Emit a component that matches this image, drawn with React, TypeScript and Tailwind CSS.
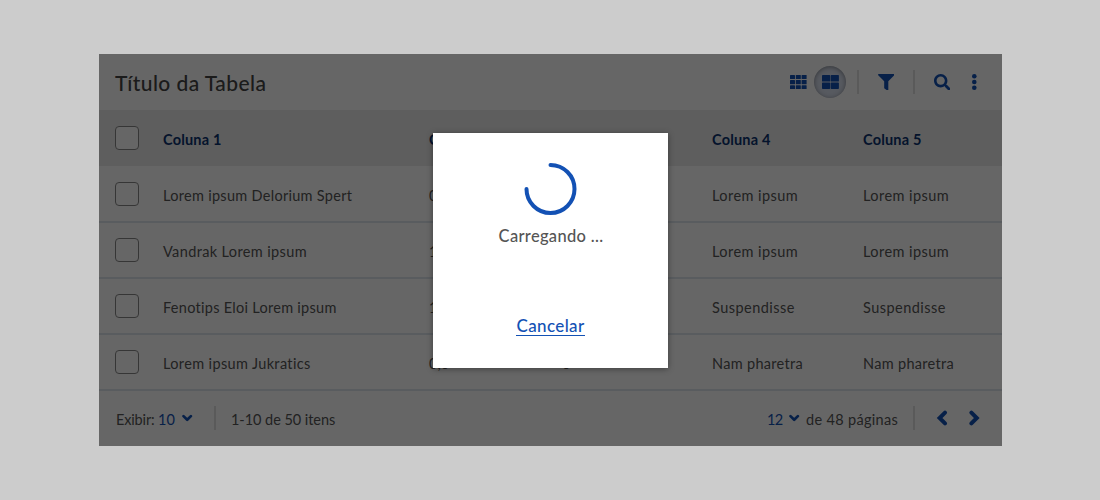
import { FaFilter, FaSearch } from 'react-icons/fa';

type Cell = { text: string; track: string };

const rows: Cell[][] = [
  [
    { text: 'Lorem ipsum Delorium Spert', track: 'tracking-[0.29px]' },
    { text: '0', track: '' },
    { text: '', track: '' },
    { text: 'Lorem ipsum', track: 'tracking-[0.43px]' },
    { text: 'Lorem ipsum', track: 'tracking-[0.43px]' },
  ],
  [
    { text: 'Vandrak Lorem ipsum', track: 'tracking-[0.37px]' },
    { text: '1', track: '' },
    { text: '', track: '' },
    { text: 'Lorem ipsum', track: 'tracking-[0.43px]' },
    { text: 'Lorem ipsum', track: 'tracking-[0.43px]' },
  ],
  [
    { text: 'Fenotips Eloi Lorem ipsum', track: 'tracking-[0.28px]' },
    { text: '1', track: '' },
    { text: '', track: '' },
    { text: 'Suspendisse', track: 'tracking-[0.47px]' },
    { text: 'Suspendisse', track: 'tracking-[0.47px]' },
  ],
  [
    { text: 'Lorem ipsum Jukratics', track: 'tracking-[0.36px]' },
    { text: '0,0', track: '' },
    { text: '0', track: '' },
    { text: 'Nam pharetra', track: 'tracking-[0.31px]' },
    { text: 'Nam pharetra', track: 'tracking-[0.31px]' },
  ],
];

const grid = 'grid grid-cols-[48px_266px_133px_150px_151px_1fr] items-center pl-4';
const iconButton = 'flex size-8 shrink-0 items-center justify-center';

function GridIcon() {
  return (
    <svg width="17" height="14" viewBox="0 0 17 14" fill="currentColor">
      {[0, 5.1, 10.2].map((y) =>
        [0, 5.8, 11.6].map((x) => <rect key={`${x}-${y}`} x={x} y={y} width="5" height="4.1" rx="0.5" />),
      )}
    </svg>
  );
}

function LargeGridIcon() {
  return (
    <svg width="17" height="14" viewBox="0 0 17 14" fill="currentColor">
      {[0, 7.4].map((y) =>
        [0, 8.7].map((x) => <rect key={`${x}-${y}`} x={x} y={y} width="8.2" height="6.6" rx="0.7" />),
      )}
    </svg>
  );
}

function DotsIcon() {
  return (
    <svg width="6" height="16" viewBox="0 0 6 16" fill="currentColor">
      <circle cx="3.3" cy="2.3" r="2.3" />
      <circle cx="3.3" cy="8" r="2.3" />
      <circle cx="3.3" cy="13.7" r="2.3" />
    </svg>
  );
}

function Caret({ className }: { className: string }) {
  return (
    <svg width="11" height="8" viewBox="0 0 11 8" fill="none" className={className}>
      <path d="M1.5 2.1L5.2 5.8L8.9 2.1" stroke="#1351b4" strokeWidth="2.7" strokeLinecap="round" strokeLinejoin="round" />
    </svg>
  );
}

function Arrow({ d }: { d: string }) {
  return (
    <svg width="12" height="16" viewBox="0 0 12 16" fill="none">
      <path d={d} stroke="currentColor" strokeWidth="4" strokeLinecap="round" />
    </svg>
  );
}

function Checkbox() {
  return <span className="size-6 rounded border border-[#888] bg-white" />;
}

function Divider({ className = '' }: { className?: string }) {
  return <span className={`block h-6 w-0.5 shrink-0 bg-[#e2e2e2] ${className}`} />;
}

function Toolbar() {
  return (
    <header className="flex h-14 items-center justify-between pl-4 pr-3">
      <h1 className="pt-px text-[21px] leading-6 font-medium tracking-[0.44px] text-[#444]">Título da Tabela</h1>
      <div className="flex items-center text-[#1351b4]">
        <button className={iconButton}><GridIcon /></button>
        <button className={`${iconButton} rounded-full bg-[#d9e0ef] shadow-[inset_0_1px_5px_rgba(0,0,0,0.4)]`}>
          <LargeGridIcon />
        </button>
        <Divider className="mx-[11px]" />
        <button className={iconButton}><FaFilter size={16.5} /></button>
        <Divider className="mx-[11px]" />
        <button className={iconButton}><FaSearch size={16.5} /></button>
        <button className={iconButton}><DotsIcon /></button>
      </div>
    </header>
  );
}

function Table() {
  return (
    <div>
      <div className={`${grid} h-14 bg-[#ebebeb] text-[14.5px] leading-5 font-bold text-[#0c326f]`}>
        <Checkbox />
        {['Coluna 1', 'Coluna 2', 'Coluna 3', 'Coluna 4', 'Coluna 5'].map((name) => (
          <span key={name} className="pt-1 tracking-[0.2px]">{name}</span>
        ))}
      </div>
      <div className="pt-px">
        {rows.map((cells, i) => (
          <div key={i} className={`${grid} h-14 border-b-2 border-[#dfe6ed] text-[14.5px] leading-5 text-[#555]`}>
            <Checkbox />
            {cells.map((cell, j) => (
              <span key={j} className={`whitespace-nowrap pt-1 ${cell.track}`}>{cell.text}</span>
            ))}
          </div>
        ))}
      </div>
    </div>
  );
}

function Footer() {
  return (
    <footer className="flex h-[55px] items-center justify-between pb-px pl-[17px] pr-3 text-[14.5px] leading-5 text-[#555]">
      <div className="flex items-center">
        <span className="w-[42px] pt-1 tracking-[-0.15px]">Exibir:</span>
        <span className="w-[24px] pt-1 text-[#1351b4]">10</span>
        <Caret className="mr-[21px]" />
        <Divider />
        <span className="pl-[15px] pt-1 tracking-[-0.05px]">1-10 de 50 itens</span>
      </div>
      <div className="flex items-center">
        <span className="w-[22px] pt-1 tracking-[-0.6px] text-[#1351b4]">12</span>
        <Caret className="mr-[6px]" />
        <span className="mr-[15px] w-[92px] whitespace-nowrap pt-1 tracking-[0.32px]">de 48 páginas</span>
        <Divider />
        <span className="ml-[11px] flex text-[#1351b4]">
          <button className={iconButton}><Arrow d="M9 2.6L3.6 8L9 13.4" /></button>
          <button className={iconButton}><Arrow d="M3.4 2.6L8.8 8L3.4 13.4" /></button>
        </span>
      </div>
    </footer>
  );
}

function LoadingDialog() {
  return (
    <div className="flex size-[235px] flex-col items-center bg-white pt-[30px] shadow-[0_1px_6px_rgba(0,0,0,0.4)]">
      <svg width="53" height="52" viewBox="0 0 53 52" fill="none">
        <path d="M26.5 2A24 24 0 1 1 2.5 26" stroke="#1351b4" strokeWidth="4" strokeLinecap="round" />
      </svg>
      <p className="mt-[11px] pl-px text-[16.5px] leading-5 font-medium tracking-[0.32px] text-[#555]">Carregando ...</p>
      <button className="mt-[71px] border-b border-[#1351b4] text-[17px] leading-[18px] font-medium tracking-[0.38px] text-[#1351b4]">
        Cancelar
      </button>
    </div>
  );
}

export default function App() {
  return (
    <main className="h-[500px] w-[1100px] bg-[#ccc] pl-[99px] pt-[54px] font-['Lato',sans-serif]">
      <section className="relative h-[392px] w-[903px] bg-white">
        <Toolbar />
        <Table />
        <Footer />
        <div className="absolute inset-0 flex justify-center bg-black/60 pt-[79px]">
          <LoadingDialog />
        </div>
      </section>
    </main>
  );
}
